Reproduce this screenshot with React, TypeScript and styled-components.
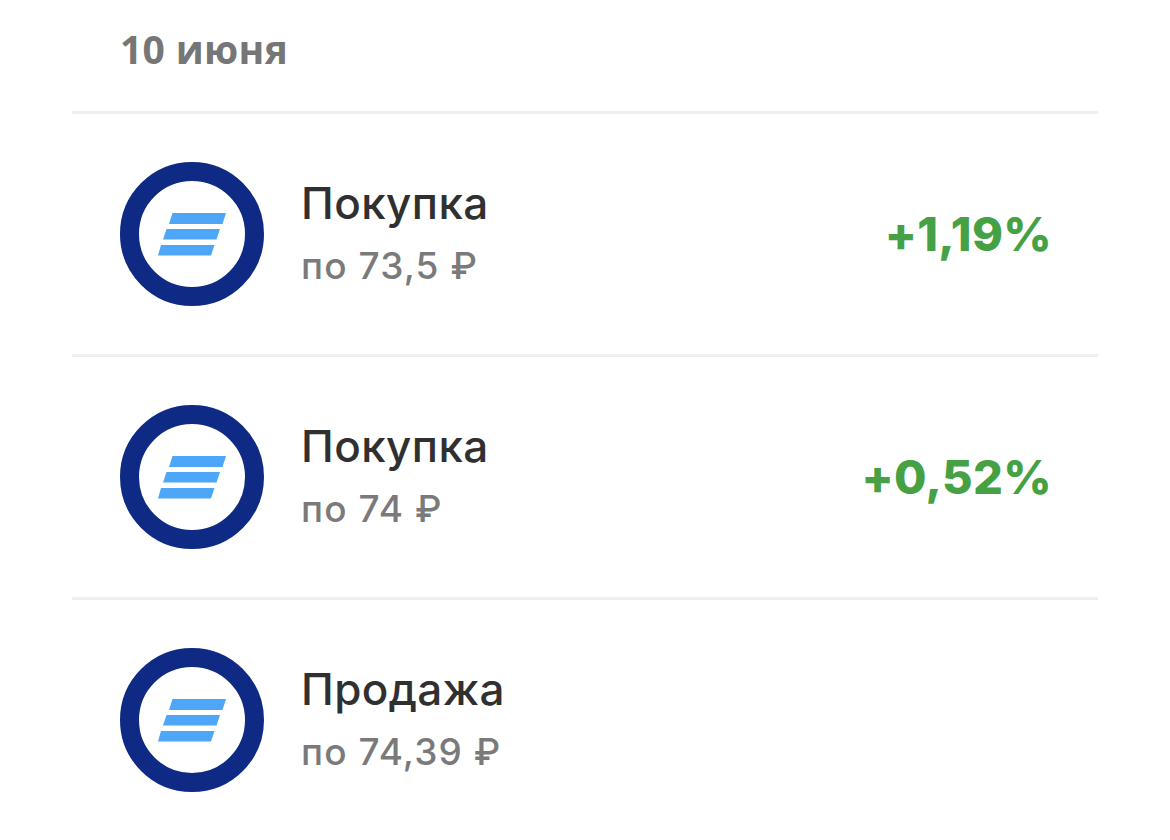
import styled, { createGlobalStyle } from "styled-components";

interface Deal {
  title: string;
  price: string;
  change?: string;
}

const deals: Deal[] = [
  { title: "Покупка", price: "по 73,5 ₽", change: "+1,19%" },
  { title: "Покупка", price: "по 74 ₽", change: "+0,52%" },
  { title: "Продажа", price: "по 74,39 ₽" },
];

const FundLogo = () => (
  <LogoSvg viewBox="0 0 144 144">
    <circle cx="72" cy="72" r="62.5" fill="#fff" stroke="#0f2a84" strokeWidth="19" />
    <g fill="#4da6f7">
      <polygon points="52.5,51 106,51 102.5,62 49,62" />
      <polygon points="46.5,67 100,67 96.5,77.5 43,77.5" />
      <polygon points="41,83 94.5,83 91,93.5 38,93.5" />
    </g>
  </LogoSvg>
);

const App = () => {
  return (
    <Page>
      <GlobalStyle />
      <DateTitle>10 июня</DateTitle>
      <List>
        {deals.map((deal, i) => (
          <Row key={i}>
            <FundLogo />
            <Info>
              <Title>{deal.title}</Title>
              <Price>{deal.price}</Price>
            </Info>
            {deal.change && <Change>{deal.change}</Change>}
          </Row>
        ))}
      </List>
    </Page>
  );
};

const GlobalStyle = createGlobalStyle`
  html, body {
    margin: 0;
    background: #fff;
    overflow: hidden;
  }
`;

const Page = styled.div`
  width: 1170px;
  height: 840px;
  overflow: hidden;
  padding: 0 72px;
  box-sizing: border-box;
  font-family: Inter, "Liberation Sans", sans-serif;
`;

const DateTitle = styled.div`
  height: 111px;
  padding: 27px 0 0 48px;
  box-sizing: border-box;
  font-family: "Open Sans", sans-serif;
  font-size: 39px;
  line-height: 44px;
  letter-spacing: 0.3px;
  font-weight: 700;
  color: #767676;
`;

const List = styled.div`
  width: 1026px;
`;

const Row = styled.div`
  display: flex;
  align-items: center;
  height: 243px;
  box-sizing: border-box;
  padding: 0 46px 0 48px;
  border-top: 3px solid #efefef;
`;

const LogoSvg = styled.svg`
  width: 144px;
  height: 144px;
  flex-shrink: 0;
`;

const Info = styled.div`
  display: flex;
  flex-direction: column;
  margin-left: 37px;
  margin-bottom: 4px;
  gap: 15px;
`;

const Title = styled.div`
  font-size: 44px;
  line-height: 52px;
  letter-spacing: 0.4px;
  font-weight: 500;
  color: #303030;
`;

const Price = styled.div`
  font-size: 37px;
  line-height: 44px;
  letter-spacing: 1.1px;
  font-weight: 500;
  color: #7a7a7a;
`;

const Change = styled.div`
  margin-left: auto;
  font-size: 47px;
  line-height: 52px;
  letter-spacing: 0.3px;
  font-weight: 800;
  color: #46a145;
`;

export default App;
